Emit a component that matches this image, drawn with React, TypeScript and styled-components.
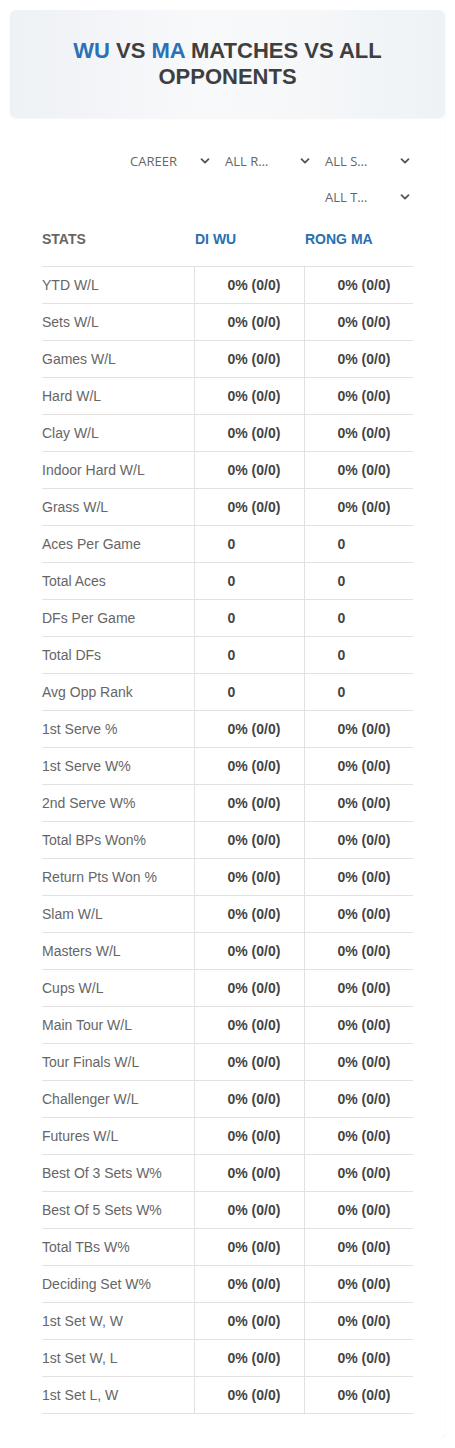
import React from "react";
import styled, { createGlobalStyle } from "styled-components";

const GlobalStyle = createGlobalStyle`
  html, body {
    margin: 0;
    padding: 0;
    background: #ffffff;
  }
  body {
    font-family: "Liberation Sans", Arial, sans-serif;
  }
`;

type StatRow = { label: string; a: string; b: string };

const pct = "0% (0/0)";

const rows: StatRow[] = [
  { label: "YTD W/L", a: pct, b: pct },
  { label: "Sets W/L", a: pct, b: pct },
  { label: "Games W/L", a: pct, b: pct },
  { label: "Hard W/L", a: pct, b: pct },
  { label: "Clay W/L", a: pct, b: pct },
  { label: "Indoor Hard W/L", a: pct, b: pct },
  { label: "Grass W/L", a: pct, b: pct },
  { label: "Aces Per Game", a: "0", b: "0" },
  { label: "Total Aces", a: "0", b: "0" },
  { label: "DFs Per Game", a: "0", b: "0" },
  { label: "Total DFs", a: "0", b: "0" },
  { label: "Avg Opp Rank", a: "0", b: "0" },
  { label: "1st Serve %", a: pct, b: pct },
  { label: "1st Serve W%", a: pct, b: pct },
  { label: "2nd Serve W%", a: pct, b: pct },
  { label: "Total BPs Won%", a: pct, b: pct },
  { label: "Return Pts Won %", a: pct, b: pct },
  { label: "Slam W/L", a: pct, b: pct },
  { label: "Masters W/L", a: pct, b: pct },
  { label: "Cups W/L", a: pct, b: pct },
  { label: "Main Tour W/L", a: pct, b: pct },
  { label: "Tour Finals W/L", a: pct, b: pct },
  { label: "Challenger W/L", a: pct, b: pct },
  { label: "Futures W/L", a: pct, b: pct },
  { label: "Best Of 3 Sets W%", a: pct, b: pct },
  { label: "Best Of 5 Sets W%", a: pct, b: pct },
  { label: "Total TBs W%", a: pct, b: pct },
  { label: "Deciding Set W%", a: pct, b: pct },
  { label: "1st Set W, W", a: pct, b: pct },
  { label: "1st Set W, L", a: pct, b: pct },
  { label: "1st Set L, W", a: pct, b: pct },
];

const Chevron = () => (
  <svg width="10" height="10" viewBox="0 0 10 10" aria-hidden="true">
    <path
      d="M1.5 3.2 L5 6.6 L8.5 3.2"
      fill="none"
      stroke="#555"
      strokeWidth="1.8"
      strokeLinecap="round"
      strokeLinejoin="round"
    />
  </svg>
);

const Filter = ({ label, indent }: { label: string; indent?: number }) => (
  <Select $indent={indent}>
    <SelectText>{label}</SelectText>
    <Chevron />
  </Select>
);

export default function App() {
  return (
    <>
      <GlobalStyle />
      <Page>
        <Card>
          <Header>
            <Title>
              <Name>WU</Name> VS <Name>MA</Name> MATCHES VS ALL OPPONENTS
            </Title>
          </Header>
          <Filters>
            <Filter label="CAREER" indent={15} />
            <Filter label="ALL R…" />
            <Filter label="ALL S…" />
            <Filter label="ALL T…" />
          </Filters>
          <Table>
            <colgroup>
              <col style={{ width: 152 }} />
              <col style={{ width: 110 }} />
              <col style={{ width: 109 }} />
            </colgroup>
            <thead>
              <tr>
                <HeadCell>STATS</HeadCell>
                <HeadCell $player>DI WU</HeadCell>
                <HeadCell $player>RONG MA</HeadCell>
              </tr>
            </thead>
            <tbody>
              {rows.map((r) => (
                <tr key={r.label}>
                  <LabelCell>{r.label}</LabelCell>
                  <ValueCell>{r.a}</ValueCell>
                  <ValueCell>{r.b}</ValueCell>
                </tr>
              ))}
            </tbody>
          </Table>
        </Card>
      </Page>
    </>
  );
}

const Page = styled.div`
  width: 455px;
  padding: 10px 10px 0 0;
  box-sizing: border-box;
`;

const Card = styled.div`
  background: #fff;
  border-radius: 0 0 6px 0;
  box-shadow: 0 1px 2px rgba(0, 0, 0, 0.06);
  padding-bottom: 24px;
`;

const Header = styled.div`
  margin-left: 10px;
  height: 108px;
  border-radius: 6px;
  background: linear-gradient(90deg, #eef1f5 0%, #f8f9fb 45%, #f5f7f9 70%, #eef2f6 100%);
  box-shadow: 0 1px 2px rgba(0, 0, 0, 0.04);
  display: flex;
  align-items: center;
  justify-content: center;
  padding: 0 30px;
  box-sizing: border-box;
`;

const Title = styled.h1`
  margin: 0;
  font-size: 22px;
  line-height: 26px;
  font-weight: 700;
  color: #3f3f3f;
  text-align: center;
`;

const Name = styled.span`
  color: #2a72b5;
`;

const Filters = styled.div`
  display: flex;
  flex-wrap: wrap;
  justify-content: flex-end;
  width: 300px;
  margin: 33px 0 0 115px;
  row-gap: 16px;
`;

const Select = styled.div<{ $indent?: number }>`
  width: 100px;
  height: 20px;
  display: flex;
  align-items: center;
  justify-content: space-between;
  padding: 0 5px 0 ${(p) => p.$indent ?? 10}px;
  box-sizing: border-box;
`;

const SelectText = styled.span`
  font-family: "Open Sans", "Noto Sans", sans-serif;
  font-size: 13px;
  color: #666;
`;

const Table = styled.table`
  margin: 11px 0 0 42px;
  width: 371px;
  border-collapse: collapse;
  table-layout: fixed;
  font-size: 14px;
`;

const HeadCell = styled.th<{ $player?: boolean }>`
  text-align: left;
  font-weight: 700;
  font-size: 14px;
  height: 48px;
  vertical-align: top;
  padding: 13px 0 0 ${(p) => (p.$player ? "1px" : "0")};
  box-sizing: border-box;
  color: ${(p) => (p.$player ? "#2a6fb0" : "#666")};
  border-bottom: 1px solid #e2e2e2;
`;

const LabelCell = styled.td`
  height: 36px;
  padding: 0;
  color: #666;
  border-bottom: 1px solid #e2e2e2;
`;

const ValueCell = styled.td`
  height: 36px;
  padding: 0 0 0 33px;
  color: #444;
  font-weight: 700;
  border-bottom: 1px solid #e2e2e2;
  border-left: 1px solid #e2e2e2;
`;
